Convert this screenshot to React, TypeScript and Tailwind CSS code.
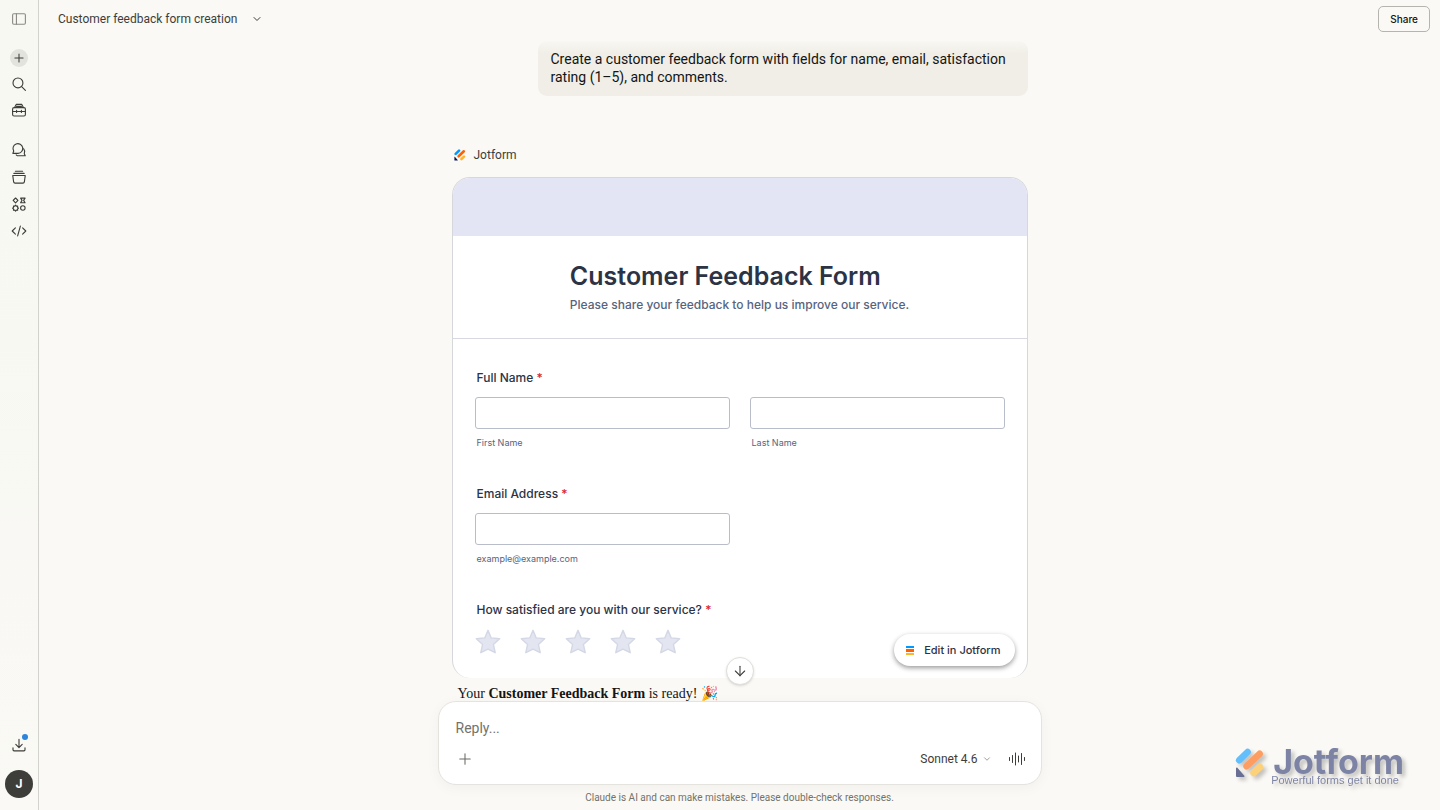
import type { ReactNode } from 'react';
import { ArrowDown, ChevronDown, Plus } from 'lucide-react';

const stroke = {
    fill: 'none',
    stroke: 'currentColor',
    strokeWidth: 1.4,
    strokeLinecap: 'round' as const,
    strokeLinejoin: 'round' as const,
};

function Icon({ children, className = 'w-4 h-4' }: { children: ReactNode; className?: string }) {
    return (
        <svg viewBox="0 0 20 20" className={className} aria-hidden="true" {...stroke}>
            {children}
        </svg>
    );
}

interface NavItem {
    label: string;
    icon: ReactNode;
}

const primaryNav: NavItem[] = [
    {
        label: 'Search',
        icon: (
            <Icon>
                <circle cx="8.7" cy="8.7" r="6.2" />
                <path d="M13.3 13.3 18 18" />
            </Icon>
        ),
    },
    {
        label: 'Customize',
        icon: (
            <Icon>
                <rect x="2" y="7" width="16" height="10.5" rx="1.8" />
                <path d="M4.5 7 6.5 3h7l2 4M7 5.5h6M2 11.8h16M7 10.5v2.6M13 10.5v2.6" />
            </Icon>
        ),
    },
];

const secondaryNav: NavItem[] = [
    {
        label: 'Chats',
        icon: (
            <Icon>
                <path d="M2.3 14.2 3.4 11.3A6.1 6.1 0 1 1 8.8 14.2Z" />
                <path d="M8 17.2h9.8l-1.2-2.6a6 6 0 0 0-.9-6.2M8 17.2a6 6 0 0 1-1.5-1" />
            </Icon>
        ),
    },
    {
        label: 'Projects',
        icon: (
            <Icon>
                <path d="M2.2 8.2h15.6l-1.1 8a1.8 1.8 0 0 1-1.8 1.5H5.1a1.8 1.8 0 0 1-1.8-1.5ZM3.6 5.5h12.8M5.5 2.8h9" />
            </Icon>
        ),
    },
    {
        label: 'Artifacts',
        icon: (
            <Icon>
                <path d="m5.7 2.5 3 3-3 3-3-3ZM12 2.7h5.6l-1.8 2.8 1.8 2.9H12l1.8-2.9Z" />
                <path d="m5.7 11.5 1 1.2 1.6-.1-.1 1.6 1.2 1-1.2 1 .1 1.6-1.6-.1-1 1.2-1-1.2-1.6.1.1-1.6-1.2-1 1.2-1-.1-1.6 1.6.1Z" />
                <circle cx="14.8" cy="15" r="2.8" />
            </Icon>
        ),
    },
    {
        label: 'Code',
        icon: (
            <Icon>
                <path d="m5.5 6-4 4 4 4M14.5 6l4 4-4 4M11.7 3.8 8.3 16.2" />
            </Icon>
        ),
    },
];

function NavButton({ label, icon }: NavItem) {
    return (
        <button aria-label={label} className="flex w-[26px] h-[26px] items-center justify-center text-[#3d3d3a]">
            {icon}
        </button>
    );
}

function JotformMark({ className }: { className: string }) {
    return (
        <svg viewBox="0 0 30 30" className={className} aria-hidden="true" fill="none" strokeLinecap="round">
            <path d="M4.3 12.2 12.6 4" stroke="#0099ff" strokeWidth="6.6" />
            <path d="M11.6 18.2 24.6 5.8" stroke="#ff6100" strokeWidth="6.6" />
            <path d="M18.6 25 25 19" stroke="#ffb629" strokeWidth="6.6" />
            <path d="M1 20.5v7.2c0 .8.4 1.3 1.2 1.3h6.3c1 0 1.3-.9.6-1.6L2.6 20c-.7-.7-1.6-.4-1.6.5Z" fill="#0a1551" />
        </svg>
    );
}

function Sidebar() {
    return (
        <aside className="flex w-[39px] shrink-0 flex-col items-center border-r border-[#d3d3ce] bg-linear-to-t from-[#faf9f5] to-[#f7f8f2] pb-3">
            <div className="flex h-[38px] items-center">
                <button aria-label="Toggle sidebar" className="text-[#8c8b85]">
                    <Icon>
                        <rect x="2" y="3.5" width="16" height="13" rx="1.5" />
                        <path d="M6.8 3.5v13" />
                    </Icon>
                </button>
            </div>
            <nav className="mt-[7px] flex flex-col items-center">
                <button aria-label="New chat" className="flex w-[26px] h-[26px] items-center justify-center text-[#3d3d3a]">
                    <span className="flex w-[18px] h-[18px] items-center justify-center rounded-full bg-[#e3e3de]">
                        <Plus className="w-3.5 h-3.5" strokeWidth={1.8} />
                    </span>
                </button>
                {primaryNav.map((item) => (
                    <NavButton key={item.label} {...item} />
                ))}
            </nav>
            <nav className="mt-3.5 flex flex-col items-center gap-px">
                {secondaryNav.map((item) => (
                    <NavButton key={item.label} {...item} />
                ))}
            </nav>
            <div className="mt-auto flex flex-col items-center gap-3">
                <button aria-label="Downloads" className="relative flex w-[26px] h-[26px] items-center justify-center text-[#3d3d3a]">
                    <Icon>
                        <path d="M10 2.8v10M6 9.2l4 4 4-4M2.5 13.5V16c0 .8.5 1.3 1.3 1.3h12.4c.8 0 1.3-.5 1.3-1.3v-2.5" />
                    </Icon>
                    <span className="absolute top-0.5 right-1 w-1.5 h-1.5 rounded-full bg-[#2c84db]" />
                </button>
                <button aria-label="Account" className="w-7 h-7 rounded-full bg-[#3d3d3a] font-['Inter',sans-serif] text-xs font-bold text-white">
                    J
                </button>
            </div>
        </aside>
    );
}

function FieldLabel({ children, htmlFor }: { children: ReactNode; htmlFor: string }) {
    return (
        <label htmlFor={htmlFor} className="block pl-0.5 text-xs leading-5 font-medium">
            {children} <span className="text-[#dc2626]">*</span>
        </label>
    );
}

function TextField({ id, hint, type = 'text' }: { id: string; hint: string; type?: string }) {
    return (
        <div>
            <input
                id={id}
                type={type}
                aria-describedby={`${id}-hint`}
                className="block h-8 w-full rounded-[3px] border border-[#b8bdc9] bg-white px-2 text-xs"
            />
            <p id={`${id}-hint`} className="mt-1.5 pl-0.5 text-[9px] leading-4 text-[#57647e]">
                {hint}
            </p>
        </div>
    );
}

function FeedbackForm() {
    return (
        <form className="relative overflow-hidden rounded-[18px] border border-b-0 border-[#d6d7da] bg-white font-['Inter',sans-serif] text-[#2c3345]">
            <div className="h-[58px] bg-[#e3e5f5]" />
            <div className="flex h-[103px] justify-center border-b border-[#d7d8e1] pt-6">
                <div>
                    <h1 className="text-[25px] leading-8 font-semibold">Customer Feedback Form</h1>
                    <p className="mt-1 text-xs leading-[18px] font-medium text-[#57647e]">
                        Please share your feedback to help us improve our service.
                    </p>
                </div>
            </div>

            <div className="flex flex-col gap-[33px] px-[22px] pt-[29px] pb-[23px]">
                <div className="flex flex-col gap-[9px]">
                    <FieldLabel htmlFor="first-name">Full Name</FieldLabel>
                    <div className="grid grid-cols-2 gap-5">
                        <TextField id="first-name" hint="First Name" />
                        <TextField id="last-name" hint="Last Name" />
                    </div>
                </div>
                <div className="flex flex-col gap-[9px]">
                    <FieldLabel htmlFor="email">Email Address</FieldLabel>
                    <div className="grid grid-cols-2 gap-5">
                        <TextField id="email" hint="example@example.com" type="email" />
                    </div>
                </div>
                <div className="flex flex-col gap-[9px]">
                    <FieldLabel htmlFor="rating-1">How satisfied are you with our service?</FieldLabel>
                    <div className="flex gap-[19px]">
                        {[1, 2, 3, 4, 5].map((value) => (
                            <label key={value} className="relative">
                                <input
                                    id={`rating-${value}`}
                                    type="radio"
                                    name="rating"
                                    value={value}
                                    aria-label={`${value} out of 5`}
                                    className="absolute inset-0 opacity-0"
                                />
                                <svg viewBox="0 0 26 26" className="w-[26px] h-[26px]" aria-hidden="true">
                                    <path
                                        d="M13 1.3 16.2 8.9l8.5.9-6.3 5.6 1.8 8.3L13 20.2l-7.2 3.5 1.8-8.3-6.3-5.6 8.5-.9Z"
                                        fill="#e3e5f0"
                                        stroke="#d4d7e5"
                                        strokeWidth="1.4"
                                        strokeLinejoin="round"
                                    />
                                </svg>
                            </label>
                        ))}
                    </div>
                </div>
            </div>

            <button
                type="button"
                className="absolute right-3 bottom-3 flex h-8 items-center gap-2.5 rounded-full bg-white pr-3.5 pl-3 text-[11px] font-medium shadow-[0_2px_5px_rgba(0,0,0,0.4)]"
            >
                <svg viewBox="0 0 8 9" className="w-2 h-[9px]" aria-hidden="true">
                    <rect width="8" height="2" fill="#0099ff" />
                    <rect y="3" width="8" height="3" fill="#ff6100" />
                    <rect y="7" width="8" height="2" fill="#ffb629" />
                </svg>
                Edit in Jotform
            </button>
        </form>
    );
}

function Composer() {
    return (
        <div className="relative w-full max-w-[604px] rounded-[18px] border border-[#e4e3de] bg-white px-[17px] pt-4 pb-3 shadow-[0_3px_14px_rgba(0,0,0,0.04)]">
            <button
                aria-label="Scroll to bottom"
                className="absolute -top-[45px] left-1/2 flex w-7 h-7 -translate-x-1/2 items-center justify-center rounded-full border border-[#e0dfda] bg-white text-[#3d3d3a] shadow-sm"
            >
                <ArrowDown className="w-4 h-4" strokeWidth={1.6} />
            </button>
            <input
                aria-label="Reply"
                placeholder="Reply..."
                className="block h-5 w-full text-sm outline-none placeholder:text-[#73726c]"
            />
            <div className="mt-2 flex h-[26px] items-center">
                <button aria-label="Add content" className="text-[#6b6a65]">
                    <Plus className="w-[18px] h-[18px]" strokeWidth={1.4} />
                </button>
                <button className="ml-auto flex items-center gap-1 text-xs text-[#3d3d3a]">
                    Sonnet 4.6
                    <ChevronDown className="w-2.5 h-2.5 text-[#8c8b85]" strokeWidth={2} />
                </button>
                <button aria-label="Use voice mode" className="-mr-0.5 ml-4 text-[#3d3d3a]">
                    <svg viewBox="0 0 18 14" className="w-[18px] h-3.5" aria-hidden="true" {...stroke} strokeWidth={1}>
                        <path d="M1.5 5.5v3M4.5 3.5v7M7.5 1v12M10.5 4v6M13.5 1.5v11M16.5 5.5v3" />
                    </svg>
                </button>
            </div>
        </div>
    );
}

export default function App() {
    return (
        <div className="flex h-screen bg-[#faf9f5] font-['Roboto',sans-serif] text-[#141413]">
            <Sidebar />
            <main className="flex min-w-0 flex-1 flex-col">
                <header className="flex h-[38px] shrink-0 items-center justify-between pr-2.5 pl-[19px]">
                    <button className="flex items-center gap-3.5 text-xs text-[#3d3d3a]">
                        Customer feedback form creation
                        <ChevronDown className="w-3 h-3" strokeWidth={2} />
                    </button>
                    <button className="h-[26px] rounded-[5px] border border-[#b5b5ae] px-[11px] font-['Inter',sans-serif] text-[10px] font-medium">
                        Share
                    </button>
                </header>

                <div className="relative min-h-0 flex-1 overflow-hidden">
                    <div className="absolute inset-x-0 top-0 h-4 bg-linear-to-b from-[#faf9f5] to-transparent" />
                    <div className="mx-auto flex max-w-[576px] flex-col pt-[3px]">
                        <p className="w-[490px] self-end rounded-[9px] bg-[#f0eee6] px-[13px] pt-[9px] pb-2.5 text-sm leading-[18px]">
                            Create a customer feedback form with fields for name, email, satisfaction rating (1–5), and
                            comments.
                        </p>
                        <div className="mt-[49px] mb-3 flex h-5 items-center gap-2 pl-0.5 text-xs text-[#3d3d3a]">
                            <JotformMark className="w-3 h-3" />
                            Jotform
                        </div>
                        <FeedbackForm />
                        <p className="mt-1.5 pl-1.5 font-['Liberation_Serif',serif] text-sm leading-5">
                            Your <strong>Customer Feedback Form</strong> is ready! 🎉
                        </p>
                    </div>
                </div>

                <footer className="flex shrink-0 flex-col items-center">
                    <Composer />
                    <p className="flex h-[25px] items-center text-[10px] text-[#73726c]">
                        Claude is AI and can make mistakes. Please double-check responses.
                    </p>
                </footer>
            </main>

            {/* Watermark */}
            <div className="absolute right-9 bottom-6 flex items-start gap-1.5 opacity-60 drop-shadow-[3px_3px_2px_rgba(0,0,0,0.4)]">
                <JotformMark className="w-[30px] h-[30px]" />
                <div className="text-[#2b3570]">
                    <div className="pl-0.5 font-['Inter',sans-serif] text-[34px] leading-[28px] font-bold">Jotform</div>
                    <div className="-mt-0.5 font-['Liberation_Sans',sans-serif] text-[11px] leading-3">
                        Powerful forms get it done
                    </div>
                </div>
            </div>
        </div>
    );
}
